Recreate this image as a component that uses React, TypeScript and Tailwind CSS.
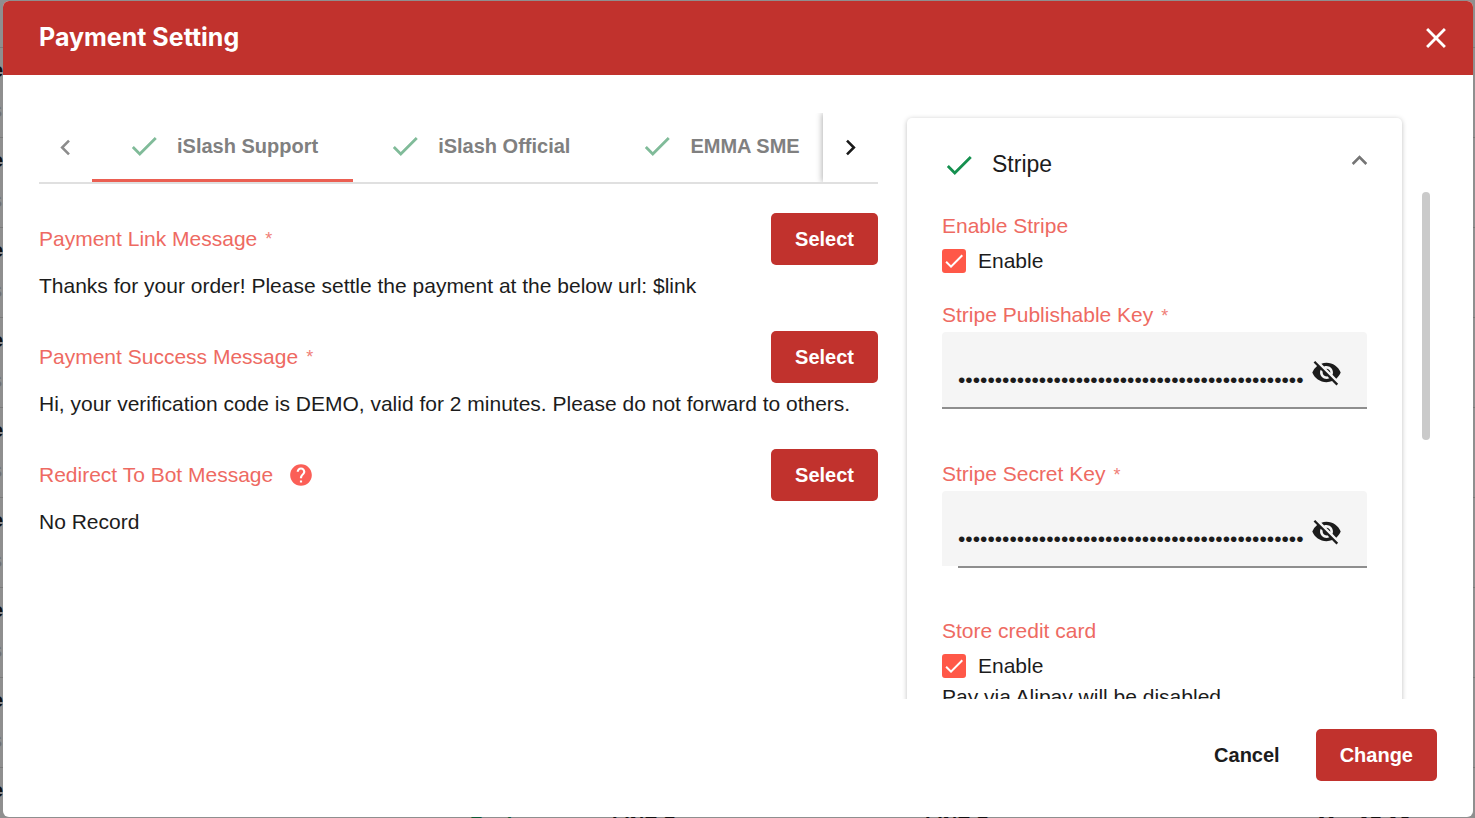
import { useState } from "react";
import {
  MdCheck,
  MdChevronLeft,
  MdChevronRight,
  MdClose,
  MdExpandLess,
  MdHelp,
  MdVisibility,
  MdVisibilityOff,
} from "react-icons/md";

const channels = ["iSlash Support", "iSlash Official", "EMMA SME"];

const messages = [
  {
    title: "Payment Link Message",
    required: true,
    value: "Thanks for your order! Please settle the payment at the below url: $link",
  },
  {
    title: "Payment Success Message",
    required: true,
    value: "Hi, your verification code is DEMO, valid for 2 minutes. Please do not forward to others.",
  },
  { title: "Redirect To Bot Message", required: false, value: "No Record" },
];

const orderRows = [0, 1, 2, 3, 4, 5, 6, 7, 8];

// Orders table that stays behind the dialog
function Backdrop() {
  return (
    <div aria-hidden="true" className="absolute inset-0 -z-10 overflow-hidden bg-[#8f8f8f]">
      <div className="h-12 border-b border-[#7a7a7a]" />
      {orderRows.map((row) => (
        <div
          key={row}
          className="grid h-[90px] grid-cols-[470fr_142fr_313fr_393fr_157fr] border-b border-[#7a7a7a] text-[20px] leading-5 font-bold text-[#111111]"
        >
          <div className="pt-3">
            <p className="-ml-2">e</p>
            {row < 8 && <p className="-ml-2 pt-5 font-normal text-[#6f6f6f]">s</p>}
          </div>
          {row === 8 && (
            <>
              <p className="pt-[45px] text-[#0b5a36]">Paid</p>
              <p className="pt-[45px]">LINE S</p>
              <p className="pt-[45px]">LINE S</p>
              <p className="pt-[45px]">Mar 17:16</p>
            </>
          )}
        </div>
      ))}
    </div>
  );
}

function Required() {
  return <span className="ml-2 text-[18px] text-[#f08078]">*</span>;
}

function ChannelTabs() {
  const [active, setActive] = useState(0);

  return (
    <div className="flex h-[71px] border-b-2 border-[#e0e0e0]">
      <button
        type="button"
        aria-label="Previous channels"
        disabled
        className="flex w-[53px] shrink-0 items-center justify-center text-[#8c8c8c]"
      >
        <MdChevronLeft size={31} />
      </button>
      <div role="tablist" className="flex min-w-0 flex-1 overflow-hidden">
        {channels.map((channel, i) => (
          <button
            key={channel}
            type="button"
            role="tab"
            aria-selected={i === active}
            onClick={() => setActive(i)}
            className={`flex shrink-0 items-center gap-4 border-b-[3px] px-[35px] text-[20px] font-bold text-[#808080] ${
              i === active ? "border-[#eb5f52]" : "border-transparent"
            }`}
          >
            <MdCheck size={34} className="text-[#80bb99]" />
            {channel}
          </button>
        ))}
      </div>
      <button
        type="button"
        aria-label="Next channels"
        className="flex w-[55px] shrink-0 items-center justify-center bg-white text-[#1a1a1a] shadow-[-1px_0_6px_rgba(0,0,0,0.3)] [clip-path:inset(0_0_0_-12px)]"
      >
        <MdChevronRight size={31} />
      </button>
    </div>
  );
}

function EnableBox({ id, title }: { id: string; title: string }) {
  return (
    <fieldset>
      <legend className="leading-[30px] text-[#ee6a62]">{title}</legend>
      <div className="flex h-10 items-center gap-3">
        <span className="grid size-6">
          <input
            id={id}
            type="checkbox"
            defaultChecked
            className="peer col-start-1 row-start-1 size-6 appearance-none rounded-[3px] border-2 border-[#8e8e8e] checked:border-[#ff5848] checked:bg-[#ff5848]"
          />
          <MdCheck
            size={24}
            className="pointer-events-none invisible col-start-1 row-start-1 text-white peer-checked:visible"
          />
        </span>
        <label htmlFor={id}>Enable</label>
      </div>
    </fieldset>
  );
}

function SecretField({ id, title, inset }: { id: string; title: string; inset?: boolean }) {
  const [visible, setVisible] = useState(false);
  const [value, setValue] = useState("pk_live_0000000000000000000000000000000000demo0");

  return (
    <div>
      <label htmlFor={id} className="block h-[34px] leading-[34px] text-[#ee6a62]">
        {title}
        <Required />
      </label>
      <div className="flex h-[75px] items-center rounded-t bg-[#f5f5f5] pr-[25px] pl-4">
        <input
          id={id}
          type={visible ? "text" : "password"}
          value={value}
          onChange={(e) => setValue(e.target.value)}
          className="min-w-0 flex-1 bg-transparent pt-5 text-[#1c1c1c] outline-none"
        />
        <button
          type="button"
          aria-label={visible ? "Hide key" : "Show key"}
          onClick={() => setVisible(!visible)}
          className="ml-1.5 pt-1.5 text-[#1c1c1c]"
        >
          {visible ? <MdVisibility size={31} /> : <MdVisibilityOff size={31} />}
        </button>
      </div>
      <div className={inset ? "ml-4 border-b-2 border-[#8e8e8e]" : "border-b-2 border-[#8e8e8e]"} />
    </div>
  );
}

export default function App() {
  return (
    <div className="relative isolate flex h-screen px-[3px] py-px pr-[2px] font-['Liberation_Sans',Arial,sans-serif] text-[21px] text-[#1c1c1c]">
      <Backdrop />
      <div
        role="dialog"
        aria-labelledby="dialog-title"
        className="flex min-w-0 flex-1 flex-col overflow-hidden rounded-md bg-white"
      >
        <header className="flex h-[74px] shrink-0 items-center justify-between bg-[#c1322d] pr-5 pl-9 text-white">
          <h1 id="dialog-title" className="font-['Inter',sans-serif] text-[25px] font-bold">
            Payment Setting
          </h1>
          <button type="button" aria-label="Close">
            <MdClose size={34} />
          </button>
        </header>

        <main className="flex min-h-0 flex-1 overflow-hidden pr-[43px] pl-9">
          <div className="min-w-0 flex-[839] pt-[38px]">
            <ChannelTabs />
            <div className="flex flex-col gap-[30px] pt-[29px]">
              {messages.map((message) => (
                <section key={message.title}>
                  <div className="flex h-[52px] items-center justify-between">
                    <h2 className="flex items-center text-[#ee6a62]">
                      {message.title}
                      {message.required ? (
                        <Required />
                      ) : (
                        <MdHelp size={26} className="ml-[15px] text-[#fb5f57]" />
                      )}
                    </h2>
                    <button
                      type="button"
                      className="h-[52px] rounded-[5px] bg-[#c1322d] px-6 text-[20px] font-bold text-white"
                    >
                      Select
                    </button>
                  </div>
                  <p className="mt-1.5 leading-[30px] whitespace-nowrap">{message.value}</p>
                </section>
              ))}
            </div>
          </div>

          <div className="ml-[29px] min-w-0 flex-[495] pt-[43px]">
            <div className="rounded-[5px] px-[35px] pb-10 shadow-[0_1px_5px_rgba(0,0,0,0.25)]">
              <div className="-mr-2 flex h-[93px] items-center justify-between">
                <h2 className="flex items-center gap-4 text-[23px]">
                  <MdCheck size={34} className="text-[#15904f]" />
                  Stripe
                </h2>
                <button type="button" aria-label="Collapse Stripe" className="pb-2 text-[#757575]">
                  <MdExpandLess size={31} />
                </button>
              </div>
              <EnableBox id="enable-stripe" title="Enable Stripe" />
              <div className="mt-[17px] flex flex-col gap-12">
                <SecretField id="publishable-key" title="Stripe Publishable Key" />
                <SecretField id="secret-key" title="Stripe Secret Key" inset />
                <div>
                  <EnableBox id="store-card" title="Store credit card" />
                  <p className="leading-[22px]">Pay via Alipay will be disabled</p>
                </div>
              </div>
            </div>
          </div>

          <div className="mt-[117px] ml-5 h-[248px] w-2 shrink-0 rounded bg-[#cacaca]" />
        </main>

        <footer className="flex shrink-0 justify-end gap-3 px-9 pt-[30px] pb-9">
          <button type="button" className="h-[52px] px-6 text-[20px] font-bold">
            Cancel
          </button>
          <button
            type="button"
            className="h-[52px] rounded-[5px] bg-[#c1322d] px-6 text-[20px] font-bold text-white"
          >
            Change
          </button>
        </footer>
      </div>
    </div>
  );
}
